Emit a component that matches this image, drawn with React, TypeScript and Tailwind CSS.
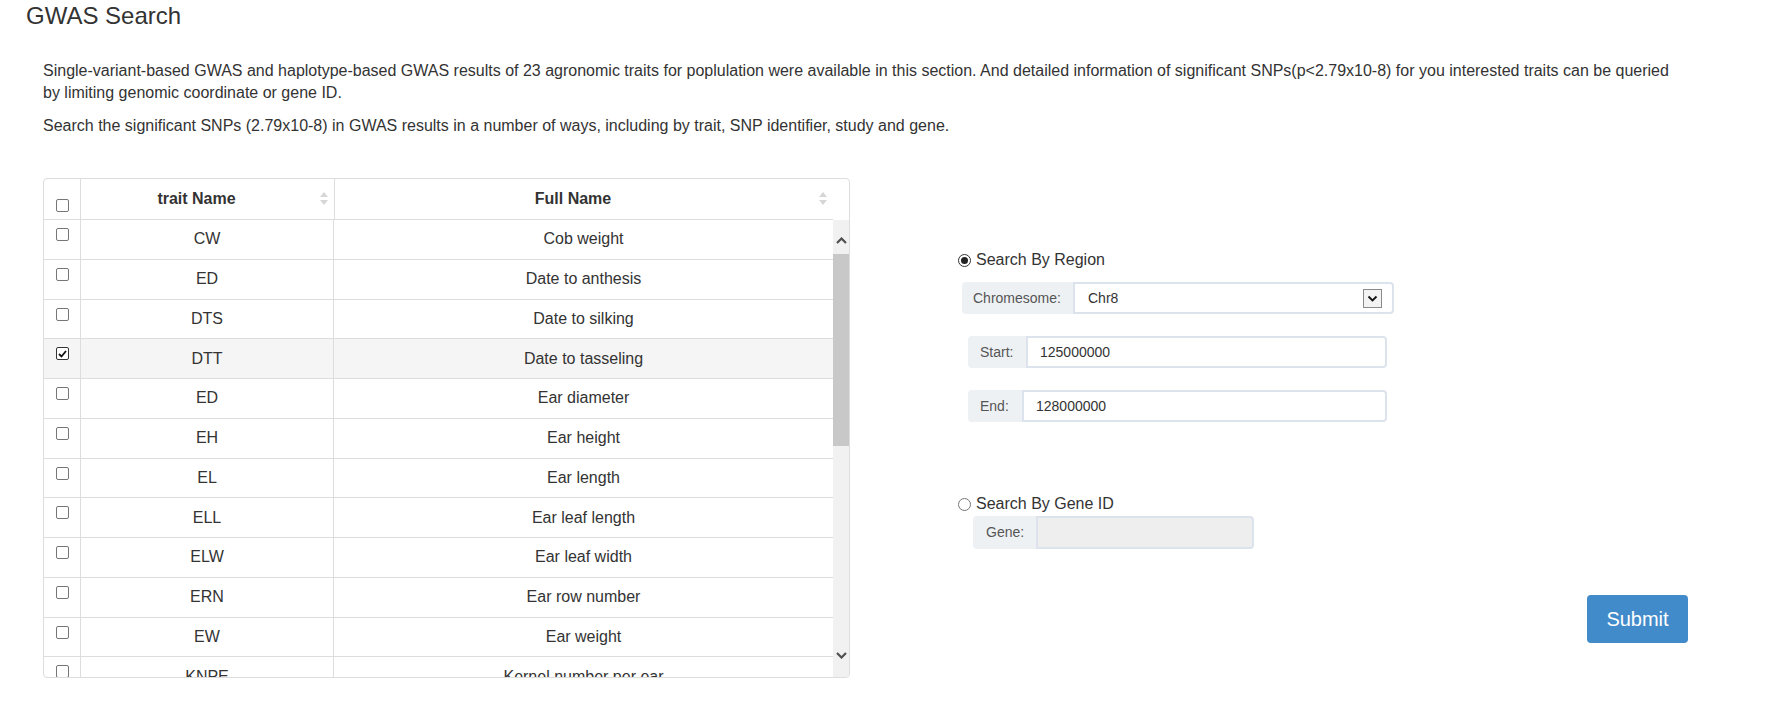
import React from "react";

const rows: [string, string, boolean?][] = [
  ["CW", "Cob weight"],
  ["ED", "Date to anthesis"],
  ["DTS", "Date to silking"],
  ["DTT", "Date to tasseling", true],
  ["ED", "Ear diameter"],
  ["EH", "Ear height"],
  ["EL", "Ear length"],
  ["ELL", "Ear leaf length"],
  ["ELW", "Ear leaf width"],
  ["ERN", "Ear row number"],
  ["EW", "Ear weight"],
  ["KNPE", "Kernel number per ear"],
];

function CheckBox({ checked }: { checked?: boolean }) {
  return (
    <div
      className={`w-[13px] h-[13px] rounded-[2px] bg-white flex items-center justify-center border ${
        checked ? "border-[#333]" : "border-[#767676]"
      }`}
    >
      {checked && (
        <svg width="9" height="8" viewBox="0 0 9 8">
          <path d="M1 4 L3.5 6.5 L8 1" fill="none" stroke="#111" strokeWidth="1.8" />
        </svg>
      )}
    </div>
  );
}

function Radio({ checked }: { checked?: boolean }) {
  return (
    <div
      className={`w-[13px] h-[13px] rounded-full bg-white flex items-center justify-center border ${
        checked ? "border-[#333]" : "border-[#767676]"
      }`}
    >
      {checked && <div className="w-[7px] h-[7px] rounded-full bg-[#222]" />}
    </div>
  );
}

function SortIcon() {
  return (
    <svg width="8" height="13" viewBox="0 0 8 13" className="absolute right-[6px] top-[13px]">
      <path d="M4 0 L8 5 L0 5 Z" fill="#d6d6d6" />
      <path d="M0 8 L8 8 L4 13 Z" fill="#d6d6d6" />
    </svg>
  );
}

function Chevron({ up }: { up?: boolean }) {
  return (
    <svg width="11" height="7" viewBox="0 0 11 7">
      <path
        d={up ? "M1 6 L5.5 1.5 L10 6" : "M1 1 L5.5 5.5 L10 1"}
        fill="none"
        stroke="#505050"
        strokeWidth="2.2"
      />
    </svg>
  );
}

export default function App() {
  return (
    <div className="w-[1772px] h-[710px] bg-white text-[#333] font-['Liberation_Sans',Arial,sans-serif] overflow-hidden">
      <h3 className="pl-[26px] pt-[3px] text-[24px] leading-[26px] text-[#333]">GWAS Search</h3>
      <div className="ml-[43px] w-[1640px] mt-[31px] text-[16px] leading-[22px]">
        <p>
          Single-variant-based GWAS and haplotype-based GWAS results of 23 agronomic traits for poplulation were
          available in this section. And detailed information of significant SNPs(p&lt;2.79x10-8) for you interested
          traits can be queried by limiting genomic coordinate or gene ID.
        </p>
        <p className="mt-[11px]">
          Search the significant SNPs (2.79x10-8) in GWAS results in a number of ways, including by trait, SNP
          identifier, study and gene.
        </p>
      </div>

      <div className="flex mt-[41px]">
        {/* Table */}
        <div className="ml-[43px] w-[807px] h-[500px] border border-[#dddddd] rounded-[4px] overflow-hidden flex flex-col shrink-0">
          <div className="flex h-[41px] shrink-0">
            <div className="flex w-[789px] border-b border-[#dddddd]">
              <div className="w-[37px] border-r border-[#dddddd] flex justify-center pt-[20px]">
                <CheckBox />
              </div>
              <div className="relative w-[254px] border-r border-[#dddddd] flex items-center justify-center pr-[22px] font-bold text-[16px]">
                trait Name
                <SortIcon />
              </div>
              <div className="relative w-[498px] flex items-center justify-center pr-[22px] font-bold text-[16px]">
                Full Name
                <SortIcon />
              </div>
            </div>
          </div>
          <div className="flex flex-1 min-h-0">
            <div className="w-[789px] overflow-hidden">
              {rows.map(([a, b, c], i) => (
                <div
                  key={i}
                  className={`flex h-[39.75px] border-b border-[#dddddd] text-[16px] ${c ? "bg-[#f5f5f5]" : ""}`}
                >
                  <div className="w-[37px] border-r border-[#dddddd] flex justify-center pt-[8px] shrink-0">
                    <CheckBox checked={c} />
                  </div>
                  <div className="w-[253px] border-r border-[#dddddd] flex items-center justify-center shrink-0">
                    {a}
                  </div>
                  <div className="w-[499px] flex items-center justify-center shrink-0">{b}</div>
                </div>
              ))}
            </div>
            <div className="w-[16px] bg-[#f1f1f1] flex flex-col">
              <div className="h-[34px] flex justify-center pt-[17px]">
                <Chevron up />
              </div>
              <div className="h-[192px] bg-[#c8c8c8]" />
              <div className="flex-1" />
              <div className="h-[34px] flex justify-center pt-[9px]">
                <Chevron />
              </div>
            </div>
          </div>
        </div>

        {/* Right panel */}
        <div className="ml-[108px] pt-[71px] flex flex-col text-[16px]">
          <label className="flex items-center gap-[5px] h-[22px] leading-[22px]">
            <Radio checked />
            <span>Search By Region</span>
          </label>

          <div className="mt-[11px] ml-[4px] flex w-[432px] h-[32px]">
            <div className="w-[111px] bg-[#eef1f4] rounded-l-[4px] flex items-center pl-[11px] text-[14px] text-[#555]">
              Chromesome:
            </div>
            <div className="flex-1 border-2 border-[#dce3ec] rounded-r-[4px] bg-white flex items-center pl-[13px] pr-[10px] text-[14px] text-[#333]">
              <span className="flex-1">Chr8</span>
              <div className="w-[19px] h-[19px] border border-[#8a8a8a] bg-[#f3f3f3] flex items-center justify-center">
                <svg width="11" height="7" viewBox="0 0 11 7">
                  <path d="M1.5 1.5 L5.5 5.5 L9.5 1.5" fill="none" stroke="#111" strokeWidth="1.8" />
                </svg>
              </div>
            </div>
          </div>

          <div className="mt-[22px] ml-[10px] flex w-[419px] h-[32px]">
            <div className="w-[58px] bg-[#eef1f4] rounded-l-[4px] flex items-center pl-[12px] text-[14px] text-[#555]">
              Start:
            </div>
            <div className="flex-1 border-2 border-[#dce3ec] rounded-r-[4px] bg-white flex items-center pl-[12px] text-[14px] text-[#333]">
              125000000
            </div>
          </div>

          <div className="mt-[22px] ml-[10px] flex w-[419px] h-[32px]">
            <div className="w-[54px] bg-[#eef1f4] rounded-l-[4px] flex items-center pl-[12px] text-[14px] text-[#555]">
              End:
            </div>
            <div className="flex-1 border-2 border-[#dce3ec] rounded-r-[4px] bg-white flex items-center pl-[12px] text-[14px] text-[#333]">
              128000000
            </div>
          </div>

          <label className="mt-[71px] flex items-center gap-[5px] h-[22px] leading-[22px]">
            <Radio />
            <span>Search By Gene ID</span>
          </label>

          <div className="mt-[1px] ml-[15px] flex w-[281px] h-[33px]">
            <div className="w-[63px] bg-[#eef1f4] rounded-l-[4px] flex items-center pl-[13px] text-[14px] text-[#555]">
              Gene:
            </div>
            <div className="flex-1 border-2 border-[#dce3ec] rounded-r-[4px] bg-[#eeeeee]" />
          </div>

          <button className="mt-[46px] ml-[629px] w-[101px] h-[48px] bg-[#428bca] text-white text-[20px] rounded-[4px]">
            Submit
          </button>
        </div>
      </div>
    </div>
  );
}
